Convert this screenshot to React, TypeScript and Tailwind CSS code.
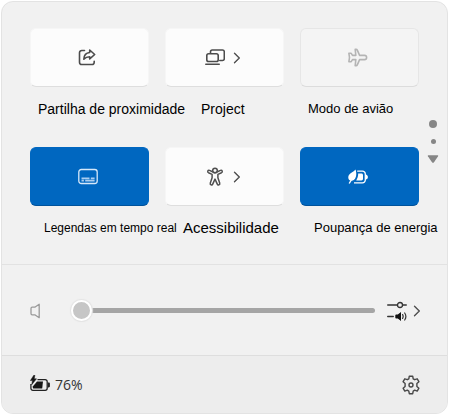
import { useState } from "react";
import type { ReactNode } from "react";

function ShareIcon() {
  return (
    <svg width="20" height="20" viewBox="0 0 20 20" fill="none" stroke="#4c4c4c" strokeWidth="1.6" strokeLinejoin="round" strokeLinecap="round">
      <path d="M6.500 2.500H3.800A2.300 2.300 0 0 0 1.500 4.800v9.400a2.300 2.300 0 0 0 2.300 2.300h10.100a2.300 2.300 0 0 0 2.300-2.300v-1" />
      <path d="M11.700 2l5 4.500-5 4.400V8.700c-2.400 0-4.200.6-5.900 2.500.2-3.800 2.200-6.400 5.900-6.700V2z" />
    </svg>
  );
}

function ProjectIcon() {
  return (
    <svg width="20" height="20" viewBox="0 0 20 20" fill="none" stroke="#4c4c4c" strokeWidth="1.6" strokeLinejoin="round" strokeLinecap="round">
      <path d="M5.500 5V3.800C5.500 2.800 6.300 2 7.300 2h10.200c1 0 1.800.8 1.800 1.800v6.900c0 1-.8 1.800-1.800 1.800h-2.700" />
      <rect x="1.800" y="5.800" width="11.400" height="7.700" rx="1.800" />
      <path d="M.8 16.200h13.400" />
    </svg>
  );
}

function PlaneIcon() {
  return (
    <svg width="20" height="20" viewBox="0 0 20 20" fill="none" stroke="#b4b4b4" strokeWidth="1.6" strokeLinejoin="round">
      <path d="M11.600 7.400h4.900a2.100 2.100 0 0 1 0 4.200h-4.900l-2.300 5.300c-.3.700-.7.900-1.300.9h-.8l.6-6.200H4.500l-1.300 2.100H.9l.6-4.200-.6-4.200h2.300l1.300 2.100h3.300l-.6-6.200H8c.6 0 1 .2 1.300.9l2.300 5.300z" />
    </svg>
  );
}

function CaptionsIcon() {
  return (
    <svg width="20" height="20" viewBox="0 0 20 20" fill="none" stroke="#d6e8f9" strokeWidth="1.3" strokeLinejoin="round">
      <rect x=".8" y="2.500" width="18.400" height="14" rx="2.500" />
      <path d="M3.500 11.300h8M12.800 11.300h3.800M3.500 13.700h2.400M7.200 13.700h9.400" stroke="#a9cdf0" strokeWidth="1.700" />
    </svg>
  );
}

function AccessibilityIcon() {
  return (
    <svg width="20" height="20" viewBox="0 0 20 20" fill="none" stroke="#505050" strokeWidth="1.5" strokeLinejoin="round">
      <circle cx="10" cy="3.500" r="2.300" />
      <path d="M7.600 4.800L4.500 3.400c-1.600-.6-2.600 1.500-1 2.300l3.600 1.700v3.400l-1.800 5.300c-.5 1.800 1.800 2.500 2.400 1l2.300-5 2.300 5c.6 1.500 2.900.8 2.400-1l-1.800-5.300V7.400l3.600-1.700c1.600-.8.600-2.900-1-2.300l-3.100 1.400" />
      <path d="M7.600 4.800c1.400 1.200 3.400 1.200 4.800 0" />
    </svg>
  );
}

function EnergySaverIcon() {
  return (
    <svg width="20" height="20" viewBox="0 0 20 20" fill="none" stroke="#ffffff" strokeLinejoin="round">
      <path d="M7.600 2.500c.9 3 1 6.300-.3 8.800-1 2-2.800 2.800-4.700 2.300C.3 13-.3 10.400.8 8.200 2 5.800 5.200 5.300 7.600 2.500z" fill="#ffffff" stroke="none" />
      <path d="M5.600 9L1.200 16.500" strokeWidth="1.400" />
      <path d="M9.200 4.200h5.300a2.800 2.800 0 0 1 2.800 2.800v6a2.800 2.800 0 0 1-2.800 2.800H6" strokeWidth="1.300" />
      <path d="M10.200 6.600h3.200c1 0 1.600.6 1.600 1.600v3.600c0 1-.6 1.600-1.600 1.600H8.200c1.300-1.800 2-4.200 2-6.800z" fill="#ffffff" stroke="none" />
      <path d="M17.700 7.400v5.200c1.400-.3 2.200-1.200 2.200-2.600s-.8-2.300-2.200-2.600z" fill="#ffffff" stroke="none" />
    </svg>
  );
}

function SpeakerIcon() {
  return (
    <svg width="12" height="16" viewBox="0 0 12 16" fill="none" stroke="#9a9a9a" strokeWidth="1.3" strokeLinejoin="round">
      <path d="M9.200 1.300v13.400L4.800 11.800H2.200A1.200 1.200 0 0 1 1 10.600V5.400a1.200 1.200 0 0 1 1.200-1.200h2.600l4.400-2.900z" />
    </svg>
  );
}

function MixerIcon() {
  return (
    <svg width="20" height="20" viewBox="0 0 20 20" fill="none" stroke="#333333" strokeWidth="1.3" strokeLinecap="round">
      <path d="M.7 4h9.600M15.700 4h3.600" />
      <circle cx="13" cy="4" r="2.500" />
      <path d="M.7 15.500h5.600" />
      <path d="M14 11v9l-3.200-2.500H9.200c-.5 0-.9-.3-.9-.8v-2.400c0-.5.4-.8.9-.8h1.600L14 11z" fill="#111111" stroke="none" />
      <path d="M15.600 13.600c.7 1.200.7 2.600 0 3.800M17.700 12c1.500 2.200 1.500 4.800 0 7" strokeWidth="1.200" />
    </svg>
  );
}

function BatteryIcon() {
  return (
    <svg width="20" height="20" viewBox="0 0 20 20" fill="none" stroke="#222222" strokeLinejoin="round">
      <path d="M7.500 4.700h7.700a2 2 0 0 1 2 2v6.600a2 2 0 0 1-2 2H2.900a2 2 0 0 1-2-2V9" strokeWidth="1.300" />
      <path d="M7 6.600h6l-.8 6.900H3.800c-.6 0-1-.4-1-1v-.9L7 6.600z" fill="#151515" stroke="none" />
      <path d="M3.800.2L.4 5.600h2.100l-.8 4.200 4.800-6H4.200L4.900.2z" fill="#151515" stroke="#151515" strokeWidth=".5" />
      <path d="M17.800 7.600h.9c.7 0 1.200.5 1.200 1.200v2.400c0 .7-.5 1.200-1.200 1.200h-.9z" fill="#222222" stroke="none" />
    </svg>
  );
}

function GearIcon() {
  return (
    <svg width="20" height="20" viewBox="0 0 20 20" fill="none" stroke="#484848" strokeWidth="1.4" strokeLinejoin="round">
      <path d="M8.300 1.200h3.400l.5 2.600 1.500.9 2.500-.9 1.700 2.900-2 1.800v2.900l2 1.800-1.700 2.900-2.500-.9-1.500.9-.5 2.600H8.300l-.5-2.600-1.500-.9-2.500.9-1.700-2.900 2-1.800V8.500l-2-1.800 1.700-2.900 2.500.9 1.500-.9.500-2.600z" />
      <circle cx="10" cy="10" r="2" />
    </svg>
  );
}

function Chevron() {
  return (
    <svg width="8" height="12" viewBox="0 0 8 12" fill="none" stroke="#505050" strokeWidth="1.4" strokeLinecap="round" strokeLinejoin="round">
      <path d="M1.500 1.200L6.300 6l-4.800 4.800" />
    </svg>
  );
}

type Tile = {
  id: string;
  label: string;
  labelClass: string;
  icon: ReactNode;
  menu?: boolean;
  disabled?: boolean;
};

const tiles: Tile[] = [
  { id: "share", label: "Partilha de proximidade", labelClass: "pl-2 text-[14px]", icon: <ShareIcon /> },
  { id: "project", label: "Project", labelClass: "pl-9 text-[14px]", icon: <ProjectIcon />, menu: true },
  { id: "plane", label: "Modo de avião", labelClass: "pl-2 text-[13px]", icon: <PlaneIcon />, disabled: true },
  { id: "captions", label: "Legendas em tempo real", labelClass: "pl-[14px] text-[12px]", icon: <CaptionsIcon /> },
  { id: "access", label: "Acessibilidade", labelClass: "pl-[18px] text-[15px]", icon: <AccessibilityIcon />, menu: true },
  { id: "energy", label: "Poupança de energia", labelClass: "pl-[14px] text-[13px]", icon: <EnergySaverIcon /> },
];

export default function App() {
  const [active, setActive] = useState<string[]>(["captions", "energy"]);
  const [volume, setVolume] = useState(0);

  const toggle = (tile: Tile) => {
    if (tile.menu) return;
    setActive((prev) =>
      prev.includes(tile.id) ? prev.filter((id) => id !== tile.id) : [...prev, tile.id]
    );
  };

  return (
    <main className="m-px rounded-xl border border-[#e3e3e3] bg-[#f1f1f1] font-['Liberation_Sans',Arial,sans-serif] text-black overflow-hidden">
      {/* Tiles */}
      <section className="flex pl-7 py-[26px]">
        <div className="grid min-w-0 flex-1 grid-cols-3 gap-x-4 gap-y-7">
          {tiles.map((tile) => {
            const on = active.includes(tile.id);
            return (
              <div key={tile.id} className="min-w-0">
                <button
                  type="button"
                  aria-labelledby={`label-${tile.id}`}
                  aria-pressed={tile.menu ? undefined : on}
                  disabled={tile.disabled}
                  onClick={() => toggle(tile)}
                  className={`flex h-[59px] w-full items-center justify-center gap-2 rounded-md border pr-1 ${
                    on
                      ? "border-[#0067c0] border-b-[#00539c] bg-[#0067c0]"
                      : tile.disabled
                        ? "border-[#e6e6e6] border-b-[#dcdcdc] bg-[#f4f4f4]"
                        : "border-[#f6f6f6] border-b-[#dedede] bg-[#fcfcfc]"
                  }`}
                >
                  {tile.icon}
                  {tile.menu && <Chevron />}
                </button>
                <div id={`label-${tile.id}`} className={`mt-3 h-5 leading-5 whitespace-nowrap ${tile.labelClass}`}>
                  {tile.label}
                </div>
              </div>
            );
          })}
        </div>

        {/* Page indicator */}
        <div className="flex w-7 shrink-0 flex-col items-center justify-center gap-[11px] pt-4">
          <span className="size-2 rounded-full bg-[#868686]" />
          <span className="size-[5px] rounded-full bg-[#868686]" />
          <button type="button" aria-label="Página seguinte">
            <svg width="12" height="8" viewBox="0 0 12 8" fill="#868686">
              <path d="M1.500.2h9c.6 0 .9.6.6 1.100L7 7.200c-.5.7-1.500.7-2 0L.9 1.300C.6.8.9.2 1.500.2z" />
            </svg>
          </button>
        </div>
      </section>

      {/* Volume */}
      <section className="flex h-[91px] items-center border-t border-[#e2e2e2] pt-px pl-7 pr-[26px]">
        <SpeakerIcon />
        <input
          type="range"
          min={0}
          max={100}
          value={volume}
          onChange={(e) => setVolume(Number(e.target.value))}
          aria-label="Volume"
          className="ml-[29px] h-6 min-w-0 grow appearance-none bg-transparent [&::-webkit-slider-runnable-track]:h-[5px] [&::-webkit-slider-runnable-track]:rounded-full [&::-webkit-slider-runnable-track]:bg-[#a5a5a5] [&::-webkit-slider-thumb]:-mt-2 [&::-webkit-slider-thumb]:size-[21px] [&::-webkit-slider-thumb]:appearance-none [&::-webkit-slider-thumb]:rounded-full [&::-webkit-slider-thumb]:border-2 [&::-webkit-slider-thumb]:border-white [&::-webkit-slider-thumb]:bg-[#c6c6c6] [&::-webkit-slider-thumb]:shadow-[0_0_1px_1px_#e4e4e4]"
        />
        <button type="button" aria-label="Saída de som" className="ml-3 flex items-center gap-[6px]">
          <MixerIcon />
          <Chevron />
        </button>
      </section>

      {/* Footer */}
      <footer className="flex h-[58px] items-center justify-between border-t border-[#dedede] bg-[#ededed] pl-7 pr-[26px]">
        <div className="flex items-center gap-[5px]">
          <BatteryIcon />
          <span className="font-['Open_Sans','Noto_Sans',sans-serif] text-[14px] leading-5 text-[#333333]">76%</span>
        </div>
        <button type="button" aria-label="Definições">
          <GearIcon />
        </button>
      </footer>
    </main>
  );
}
